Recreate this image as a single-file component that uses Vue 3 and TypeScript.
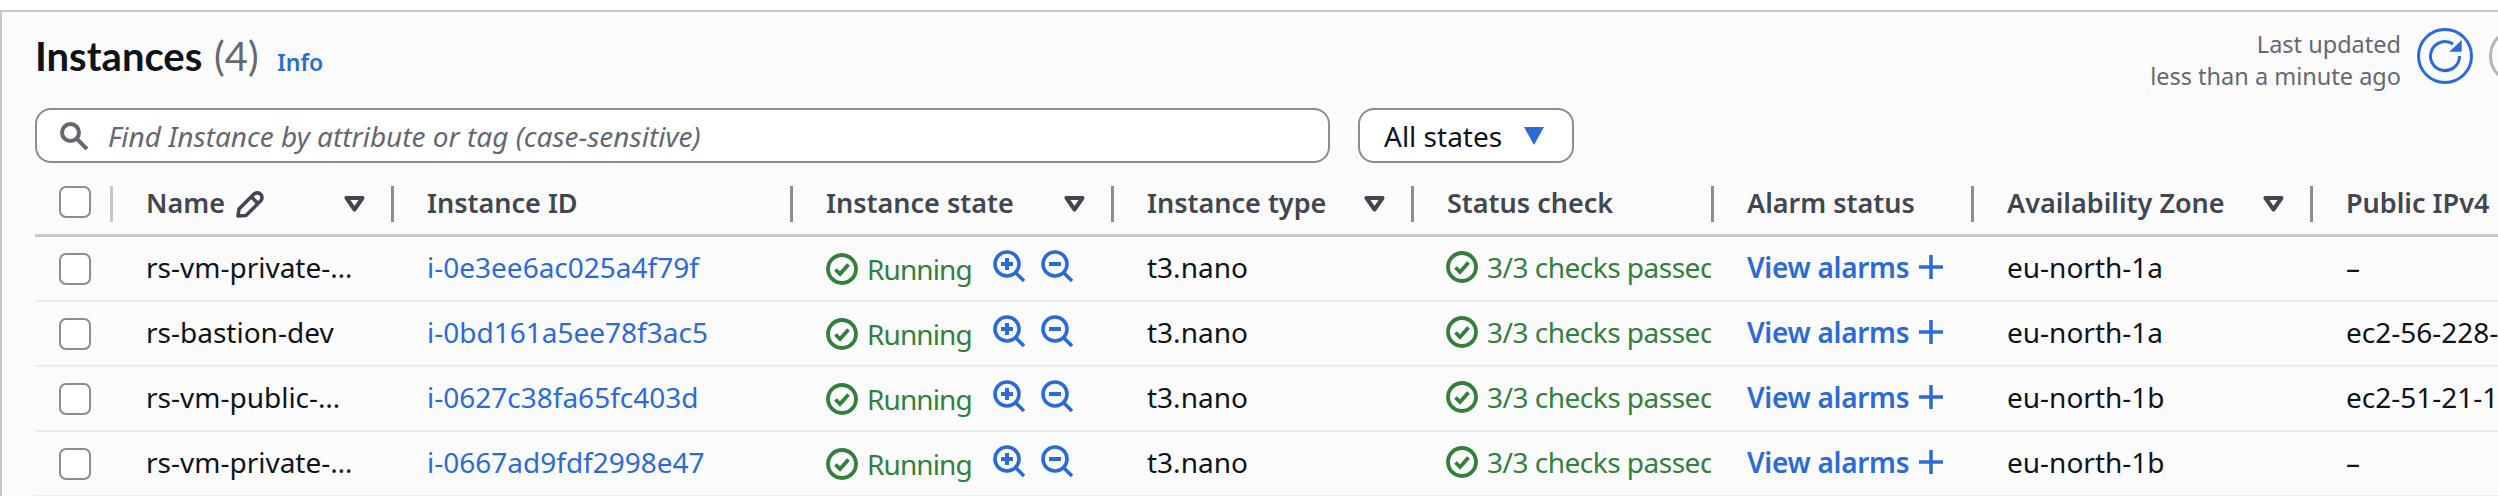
<script setup lang="ts">
interface Instance {
  name: string
  id: string
  zone: string
  dns: string
}

const instances: Instance[] = [
  { name: 'rs-vm-private-…', id: 'i-0e3ee6ac025a4f79f', zone: 'eu-north-1a', dns: '–' },
  { name: 'rs-bastion-dev', id: 'i-0bd161a5ee78f3ac5', zone: 'eu-north-1a', dns: 'ec2-56-228-' },
  { name: 'rs-vm-public-…', id: 'i-0627c38fa65fc403d', zone: 'eu-north-1b', dns: 'ec2-51-21-1' },
  { name: 'rs-vm-private-…', id: 'i-0667ad9fdf2998e47', zone: 'eu-north-1b', dns: '–' }
]

const columns = [
  { label: 'Name', edit: true, filter: true },
  { label: 'Instance ID', edit: false, filter: false },
  { label: 'Instance state', edit: false, filter: true },
  { label: 'Instance type', edit: false, filter: true },
  { label: 'Status check', edit: false, filter: false },
  { label: 'Alarm status', edit: false, filter: false },
  { label: 'Availability Zone', edit: false, filter: true },
  { label: 'Public IPv4', edit: false, filter: false }
]
</script>

<template>
  <div class="panel">
    <div class="top">
      <h1 class="title">Instances <span class="count">(4)</span> <a class="info">Info</a></h1>
      <div class="updated">
        <div class="updated-text">Last updated<br />less than a minute ago</div>
        <svg class="round" width="56" height="56" viewBox="0 0 56 56" fill="none">
          <circle cx="28" cy="28" r="26.5" stroke="#2b6bd9" stroke-width="3" />
          <path d="M42.5 28 A14.5 14.5 0 1 1 36 16" stroke="#2b6bd9" stroke-width="3" />
          <path d="M32.3 23.7 H44.7 V12 Z" fill="#2b6bd9" />
        </svg>
        <svg class="round" width="56" height="56" viewBox="0 0 56 56" fill="none">
          <circle cx="28" cy="28" r="26.5" stroke="#b4b4bb" stroke-width="3" />
        </svg>
      </div>
    </div>

    <div class="toolbar">
      <div class="search">
        <svg width="28" height="28" viewBox="0 0 28 28" fill="none" stroke="#656871" stroke-width="4">
          <circle cx="10.5" cy="10.5" r="8.5" />
          <path d="M16 16 L27 27" />
        </svg>
        <span>Find Instance by attribute or tag (case-sensitive)</span>
      </div>
      <div class="states">
        <span>All states</span>
        <svg width="20" height="18" viewBox="0 0 20 18"><path d="M0 0 H20 L10 18 Z" fill="#2b6bd9" /></svg>
      </div>
    </div>

    <div class="row head">
      <div class="cell select"><span class="box"></span></div>
      <div v-for="col in columns" :key="col.label" class="cell th">
        <span class="th-label">{{ col.label }}</span>
        <svg v-if="col.edit" class="pencil" width="28" height="27" viewBox="0 0 28 27" fill="none" stroke="#414750" stroke-width="3.5" stroke-linejoin="round">
          <path d="M2 25 L3 18 L18 3 Q21 0.8 24.5 3 Q27.2 6 25 9.5 L10 24.5 Z" />
          <path d="M15.5 6 L22 12.5" />
        </svg>
        <svg v-if="col.filter" class="filter" width="21" height="16" viewBox="0 0 21 16" fill="none">
          <path d="M2.5 2 H18.5 L10.5 13.5 Z" stroke="#414750" stroke-width="4" stroke-linejoin="round" />
        </svg>
      </div>
    </div>

    <div v-for="item in instances" :key="item.id" class="row body">
      <div class="cell select"><span class="box"></span></div>
      <div class="cell">{{ item.name }}</div>
      <div class="cell link">{{ item.id }}</div>
      <div class="cell state">
        <svg class="ok" width="32" height="32" viewBox="0 0 32 32" fill="none" stroke="#33803d" stroke-width="3.8">
          <circle cx="16" cy="16" r="14" />
          <path d="M9.5 16.5 L14 21 L22.5 11.5" />
        </svg>
        <span class="green">Running</span>
        <svg class="zoom" width="32" height="32" viewBox="0 0 32 32" fill="none" stroke="#2b6bd9" stroke-width="3.6">
          <circle cx="14" cy="14" r="12" />
          <path d="M22.5 22.5 L31 31" />
          <path stroke-width="4" d="M8 14 H20 M14 8 V20" />
        </svg>
        <svg class="zoom" width="32" height="32" viewBox="0 0 32 32" fill="none" stroke="#2b6bd9" stroke-width="3.6">
          <circle cx="14" cy="14" r="12" />
          <path d="M22.5 22.5 L31 31" />
          <path stroke-width="4" d="M8 14 H20" />
        </svg>
      </div>
      <div class="cell">t3.nano</div>
      <div class="cell status">
        <svg class="ok" width="32" height="32" viewBox="0 0 32 32" fill="none" stroke="#33803d" stroke-width="3.8">
          <circle cx="16" cy="16" r="14" />
          <path d="M9.5 16.5 L14 21 L22.5 11.5" />
        </svg>
        <span class="green">3/3 checks passed</span>
      </div>
      <div class="cell alarm">
        <span>View alarms</span>
        <svg width="24" height="24" viewBox="0 0 24 24" fill="none" stroke="#2b6bd9" stroke-width="3.5"><path d="M0 12 H24 M12 0 V24" /></svg>
      </div>
      <div class="cell">{{ item.zone }}</div>
      <div class="cell">{{ item.dns }}</div>
    </div>
  </div>
</template>

<style>
body {
  background: #fff;
  overflow: hidden;
}
</style>

<style scoped>
.panel {
  box-sizing: border-box;
  width: 2620px;
  height: 486px;
  margin-top: 10px;
  padding: 0 0 0 33px;
  background: #fbfbfb;
  border-top: 2px solid #c6c6cd;
  border-left: 2px solid #c6c6cd;
  font-family: "Noto Sans", sans-serif;
  font-size: 28px;
  color: #0f141a;
  overflow: hidden;
}
.top {
  display: flex;
  justify-content: space-between;
  width: 2510px;
  height: 96px;
  padding-top: 16px;
  box-sizing: border-box;
}
.title {
  margin: 5px 0 0;
  font-family: Lato, "Noto Sans", sans-serif;
  font-size: 40px;
  font-weight: 700;
  line-height: 46px;
}
.count {
  margin-left: 2px;
  font-weight: 400;
  color: #656871;
}
.info {
  margin-left: 9px;
  font-family: "Noto Sans", sans-serif;
  font-size: 23px;
  font-weight: 600;
  color: #2b6bd9;
}
.updated {
  display: flex;
  align-items: flex-start;
  gap: 16px;
}
.updated-text {
  font-size: 23.5px;
  line-height: 32px;
  color: #656871;
  text-align: right;
}
.round {
  flex: none;
}
.toolbar {
  display: flex;
  gap: 28px;
}
.search,
.states {
  box-sizing: border-box;
  height: 55px;
  display: flex;
  align-items: center;
  background: #fff;
  border: 2px solid #8c8c94;
  border-radius: 16px;
}
.search {
  width: 1295px;
  padding-left: 23px;
  gap: 20px;
  color: #656871;
  font-style: italic;
}
.states {
  width: 216px;
  padding-left: 24px;
  gap: 22px;
}
.row {
  display: grid;
  grid-template-columns: 75px 281px 399px 321px 300px 300px 260px 339px 300px;
  align-items: center;
}
.head {
  height: 74px;
  padding-top: 11px;
  border-bottom: 3px solid #c6c6cd;
  box-sizing: border-box;
  color: #414750;
  font-size: 27px;
  font-weight: 600;
}
.body {
  height: 65px;
  padding-bottom: 3px;
  border-bottom: 2px solid #ebebf0;
  box-sizing: border-box;
}
.cell {
  display: flex;
  align-items: center;
  padding-left: 36px;
  white-space: nowrap;
  overflow: hidden;
}
.select {
  padding-left: 24px;
}
.head .select {
  margin-bottom: 4px;
}
.body .select {
  padding-top: 3px;
}
.box {
  display: block;
  box-sizing: border-box;
  width: 32px;
  height: 32px;
  background: #fff;
  border: 2px solid #8c8c94;
  border-radius: 7px;
}
.th {
  position: relative;
  height: 36px;
  padding-left: 33px;
  border-left: 3px solid #8c8c94;
  box-sizing: border-box;
  overflow: visible;
}
.head .cell:nth-child(2) {
  border-left-color: #c6c6cd;
}
.th-label {
  margin-bottom: 4px;
}
.pencil {
  margin-left: 11px;
}
.filter {
  position: absolute;
  right: 26px;
  top: 10px;
}
.link {
  color: #2b6bd9;
}
.green {
  color: #33803d;
  letter-spacing: -0.5px;
}
.ok {
  flex: none;
}
.state .ok {
  margin-top: 4px;
  margin-right: 9px;
}
.state .green {
  margin-top: 4px;
  letter-spacing: -0.9px;
}
.zoom {
  flex: none;
  margin-left: 16px;
  margin-bottom: 2px;
}
.green + .zoom {
  margin-left: 21px;
}
.status {
  gap: 9px;
  padding-left: 35px;
}
.alarm {
  gap: 10px;
  color: #2b6bd9;
  font-weight: 600;
  letter-spacing: -0.3px;
}
</style>
